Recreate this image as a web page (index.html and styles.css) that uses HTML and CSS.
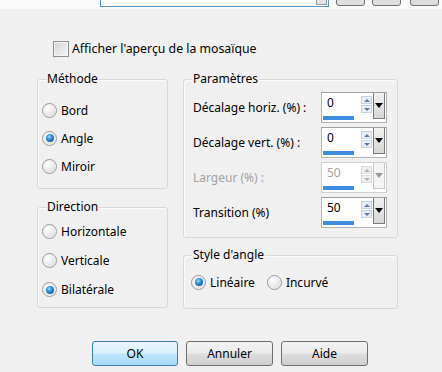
FILE: index.html
```html
<!DOCTYPE html>
<html lang="fr">

<head>
    <meta charset="UTF-8">
    <link rel="stylesheet" href="styles.css">
    <title>Mosaïque</title>
</head>

<body>
    <!-- bande du haut (préréglages, coupée) -->
    <div class="top-strip">
        <div class="preset-box"><span class="preset-drop"></span></div>
        <span class="top-btn"></span>
        <span class="top-btn"></span>
        <span class="top-btn last"></span>
    </div>

    <main class="dialog">
        <div class="check-row"><span class="checkbox"></span>Afficher l'aperçu de la mosaïque</div>

        <div class="columns">
            <div class="col-left">
                <!-- Méthode -->
                <section class="group group-method">
                    <div class="group-title">Méthode</div>
                    <div class="radio-list">
                        <div class="radio-row"><span class="radio"></span>Bord</div>
                        <div class="radio-row"><span class="radio checked"></span>Angle</div>
                        <div class="radio-row"><span class="radio"></span>Miroir</div>
                    </div>
                </section>

                <!-- Direction -->
                <section class="group group-direction">
                    <div class="group-title">Direction</div>
                    <div class="radio-list">
                        <div class="radio-row"><span class="radio"></span>Horizontale</div>
                        <div class="radio-row"><span class="radio"></span>Verticale</div>
                        <div class="radio-row"><span class="radio checked"></span>Bilatérale</div>
                    </div>
                </section>
            </div>

            <div class="col-right">
                <!-- Paramètres -->
                <section class="group group-params">
                    <div class="group-title">Paramètres</div>
                    <div class="param-list">
                        <div class="param-row">
                            <span>Décalage horiz. (%) :</span>
                            <div class="spin">
                                <div class="spin-value"><span>0</span><i class="spin-bar"></i></div>
                                <div class="spin-arrows"><b class="arrow-up"></b><b class="arrow-down"></b></div>
                                <div class="spin-drop"></div>
                            </div>
                        </div>
                        <div class="param-row">
                            <span>Décalage vert. (%) :</span>
                            <div class="spin">
                                <div class="spin-value"><span>0</span><i class="spin-bar"></i></div>
                                <div class="spin-arrows"><b class="arrow-up"></b><b class="arrow-down"></b></div>
                                <div class="spin-drop"></div>
                            </div>
                        </div>
                        <div class="param-row disabled">
                            <span>Largeur (%) :</span>
                            <div class="spin">
                                <div class="spin-value"><span>50</span><i class="spin-bar"></i></div>
                                <div class="spin-arrows"><b class="arrow-up"></b><b class="arrow-down"></b></div>
                                <div class="spin-drop"></div>
                            </div>
                        </div>
                        <div class="param-row">
                            <span>Transition (%)</span>
                            <div class="spin">
                                <div class="spin-value"><span>50</span><i class="spin-bar"></i></div>
                                <div class="spin-arrows"><b class="arrow-up"></b><b class="arrow-down"></b></div>
                                <div class="spin-drop"></div>
                            </div>
                        </div>
                    </div>
                </section>

                <!-- Style d'angle -->
                <section class="group group-style">
                    <div class="group-title">Style d'angle</div>
                    <div class="inline-radios">
                        <div class="radio-row"><span class="radio checked"></span>Linéaire</div>
                        <div class="radio-row"><span class="radio"></span>Incurvé</div>
                    </div>
                </section>
            </div>
        </div>

        <div class="buttons">
            <button class="btn btn-default">OK</button>
            <button class="btn">Annuler</button>
            <button class="btn">Aide</button>
        </div>
    </main>
</body>

</html>
```

FILE: styles.css
```css
/* global */
body {
    margin: 0;
    background: #f0f0f0;
    font-family: "Noto Sans", "Open Sans", sans-serif;
    font-size: 12px;
    color: #000;
}

/* top strip */
.top-strip {
    height: 9px;
    overflow: hidden;
    display: flex;
    align-items: flex-start;
    padding-left: 100px;
    background: #fafafa;
}

.preset-box {
    width: 227px;
    height: 20px;
    margin-top: -15px;
    border: 1px solid #5a93c8;
    background: #fff;
    display: flex;
    justify-content: flex-end;
    align-items: flex-end;
}

.preset-drop {
    width: 9px;
    height: 12px;
    margin: 0 1px 1px 0;
    border: 1px solid #9a9a9a;
    background: #e4e4e4;
}

.top-btn {
    width: 27px;
    height: 20px;
    margin: -16px 0 0 7px;
    border: 1px solid #707070;
    border-radius: 3px;
    background: #dedede;
}

.top-btn.last {
    margin-left: 9px;
}

/* checkbox */
.check-row {
    display: flex;
    align-items: center;
    height: 17px;
    margin-top: 31px;
    padding-left: 53px;
    font-size: 12.3px;
}

.checkbox {
    width: 16px;
    height: 16px;
    box-sizing: border-box;
    margin-right: 3px;
    border: 1px solid #8e8f8f;
    background: linear-gradient(135deg, #d4d4d4, #f6f6f6);
    box-shadow: inset 0 0 0 1px #f4f4f4;
}

/* columns */
.columns {
    display: flex;
    gap: 15px;
    margin-top: 22px;
    padding-left: 37px;
}

.col-left {
    width: 131px;
}

.col-right {
    width: 215px;
}

/* group boxes */
.group {
    box-sizing: border-box;
    border: 1px solid #d8d8d8;
    border-radius: 3px;
    box-shadow: inset 1px 1px 0 #fbfbfb;
}

.group-title {
    width: fit-content;
    line-height: 16px;
    margin: -9px 0 0 8px;
    padding: 0 1px;
    background: #f0f0f0;
}

.group-method {
    height: 110px;
}

.group-direction {
    height: 101px;
    margin-top: 18px;
}

.group-params {
    height: 159px;
}

.group-style {
    height: 54px;
    margin-top: 17px;
}

/* radios */
.radio-list {
    padding: 9px 0 0 4px;
}

.group-direction .radio-list {
    padding-top: 2px;
}

.radio-list .radio-row {
    height: 28px;
}

.group-direction .radio-row {
    height: 29px;
}

.radio-row {
    display: flex;
    align-items: center;
}

.radio {
    width: 15px;
    height: 15px;
    box-sizing: border-box;
    margin-right: 4px;
    border-radius: 50%;
    border: 1px solid #9a9a9a;
    background: radial-gradient(circle at 35% 30%, #ffffff 0, #e8e8e8 55%, #cdcdcd 100%);
    box-shadow: inset 0 0 0 1px #f2f2f2;
    display: flex;
    justify-content: center;
    align-items: center;
}

.radio.checked::after {
    content: "";
    width: 8px;
    height: 8px;
    border-radius: 50%;
    background: radial-gradient(circle at 40% 35%, #9edbff 0, #2b8fd6 40%, #0b3f6e 100%);
}

.inline-radios {
    display: flex;
    gap: 12px;
    padding: 9px 0 0 7px;
}

.inline-radios .radio-row {
    height: 20px;
}

/* parameters */
.param-list {
    display: flex;
    flex-direction: column;
    gap: 4px;
    padding: 5px 10px 0 9px;
}

.param-row {
    display: flex;
    justify-content: space-between;
    align-items: center;
}

.param-row.disabled {
    color: #a3a3a3;
}

/* spinner field */
.spin {
    width: 66px;
    height: 31px;
    box-sizing: border-box;
    display: flex;
    border: 1px solid #b3b3b3;
    border-top-color: #a0a0a0;
    background: #fff;
}

.spin-value {
    flex: 1;
    display: flex;
    flex-direction: column;
    padding-left: 1px;
}

.spin-value span {
    padding: 3px 0 0 4px;
    line-height: 14px;
}

.spin-bar {
    width: 31px;
    height: 4px;
    margin-top: auto;
    margin-bottom: 2px;
    background: #3d8ee0;
}

.spin-arrows {
    display: flex;
    flex-direction: column;
    gap: 1px;
    padding-top: 3px;
    margin-right: 1px;
}

.arrow-up,
.arrow-down {
    width: 11px;
    height: 8px;
    box-sizing: border-box;
    border: 1px solid #c9d3de;
    background: #e9eef4;
    display: flex;
    justify-content: center;
    align-items: center;
}

.arrow-up::after {
    content: "";
    border-left: 3px solid transparent;
    border-right: 3px solid transparent;
    border-bottom: 3px solid #5c7ba3;
}

.arrow-down::after {
    content: "";
    border-left: 3px solid transparent;
    border-right: 3px solid transparent;
    border-top: 3px solid #5c7ba3;
}

.spin-drop {
    width: 12px;
    height: 26px;
    box-sizing: border-box;
    margin-right: 1px;
    border: 1px solid #7a7a7a;
    border-top: none;
    background: linear-gradient(#f2f2f2, #d6d6d6);
    display: flex;
    justify-content: center;
    align-items: center;
}

.spin-drop::after {
    content: "";
    border-left: 4px solid transparent;
    border-right: 4px solid transparent;
    border-top: 5px solid #000;
}

.disabled .spin {
    border-color: #cfcfcf;
}

.disabled .arrow-up,
.disabled .arrow-down {
    border-color: #dadada;
    background: #f0f0f0;
}

.disabled .arrow-up::after {
    border-bottom-color: #b0b0b0;
}

.disabled .arrow-down::after {
    border-top-color: #b0b0b0;
}

.disabled .spin-drop {
    border-color: #c8c8c8;
    background: #f4f4f4;
}

.disabled .spin-drop::after {
    border-top-color: #9a9a9a;
}

/* buttons */
.buttons {
    display: flex;
    gap: 8px;
    margin-top: 32px;
    padding-left: 92px;
}

.btn {
    width: 87px;
    height: 25px;
    border: 1px solid #707070;
    border-radius: 3px;
    background: linear-gradient(#f2f2f2 0, #ebebeb 48%, #dddddd 52%, #cfcfcf 100%);
    font-family: inherit;
    font-size: 12px;
    color: #000;
    padding: 0;
}

.btn-default {
    width: 86px;
    border-color: #3c7fb1;
    background: linear-gradient(#eaf6fd 0, #d9f0fc 48%, #bee6fd 52%, #a7d9f5 100%);
}
```
